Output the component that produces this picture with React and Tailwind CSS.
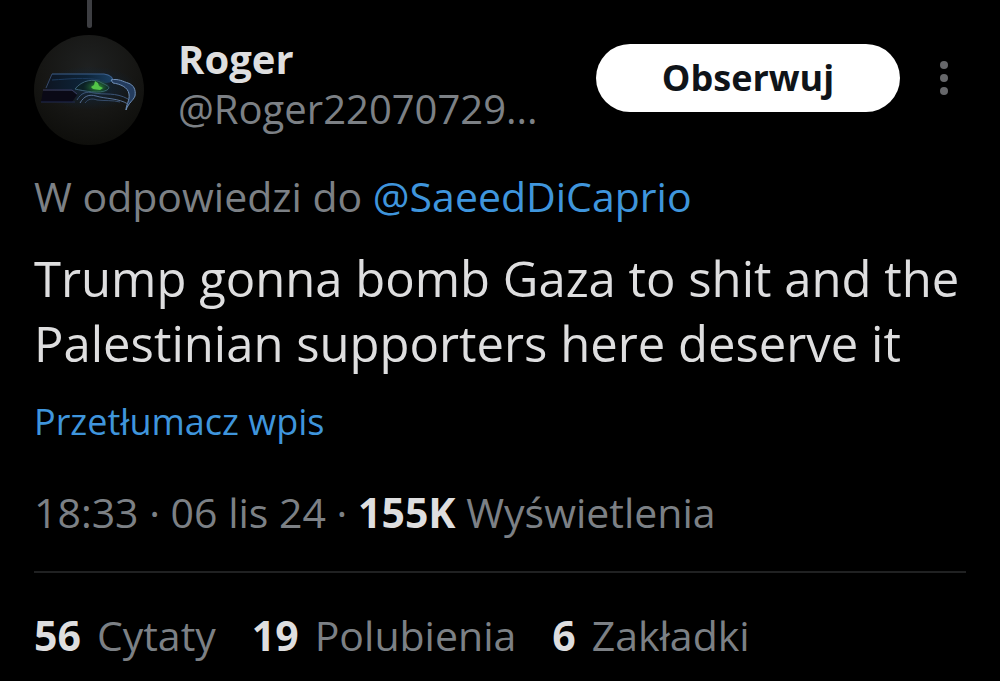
import React from 'react'

const stats = [
  { value: '56', label: 'Cytaty' },
  { value: '19', label: 'Polubienia' },
  { value: '6', label: 'Zakładki' },
]

const Avatar = () => (
  <svg viewBox="0 0 112 112" className="size-28 shrink-0" role="img" aria-label="Roger">
    <defs>
      <radialGradient id="disc" cx="0.5" cy="0.3" r="0.7">
        <stop offset="0" stopColor="#1f2121" />
        <stop offset="0.6" stopColor="#161614" />
        <stop offset="1" stopColor="#0e0e0b" />
      </radialGradient>
      <radialGradient id="haze">
        <stop offset="0" stopColor="#0e2740" stopOpacity="0.8" />
        <stop offset="1" stopColor="#0e2740" stopOpacity="0" />
      </radialGradient>
      <linearGradient id="crown" x1="0" y1="0" x2="1" y2="0">
        <stop offset="0" stopColor="#0d1522" />
        <stop offset="0.6" stopColor="#0d2439" />
        <stop offset="1" stopColor="#1b4063" />
      </linearGradient>
      <radialGradient id="glow">
        <stop offset="0" stopColor="#3fae3c" stopOpacity="0.9" />
        <stop offset="1" stopColor="#1c5a3a" stopOpacity="0" />
      </radialGradient>
    </defs>
    <circle cx="55" cy="56" r="55" fill="url(#disc)" />
    <ellipse cx="56" cy="54" rx="48" ry="22" fill="url(#haze)" />
    {/* head */}
    <path d="M18 40 H70 C76 41 79 43 79 47 C74 50 69 49 64 47 C54 44 47 49 41 56 H12 Z" fill="url(#crown)" />
    <path d="M18 40 H70 C76 41 79 43 79 47" fill="none" stroke="#3b5f8c" strokeWidth="1.2" />
    <path d="M18 40 L12 54" stroke="#35496b" strokeWidth="1" />
    <path d="M18 46 C36 45 50 43 66 46" fill="none" stroke="#1d3a5c" strokeWidth="1" />
    {/* back of the neck */}
    <path d="M9 57 H38 L43 61 L38 68 H7 Z" fill="#0a0916" />
    <path d="M9 56 H38 L43 60" fill="none" stroke="#3a3a63" strokeWidth="1" />
    <path d="M7 68 H41" stroke="#212b50" strokeWidth="1" />
    {/* eye */}
    <path d="M41 55 C48 46 60 44 68 49 C74 52 77 53 73 56 C66 60 50 57 41 55 Z" fill="#0b2024" stroke="#3d6078" strokeWidth="1" />
    <ellipse cx="63" cy="53" rx="14" ry="8" fill="url(#glow)" />
    <path d="M57 53 L60 51 L61 47 L64 49 L65 52 L69 54 L66 56 L59 55 Z" fill="#53c447" />
    {/* beak */}
    <path d="M77 46 C84 44 90 48 94 49 C100 51 102 56 101 62 C99 67 95 68 92 76 C92 71 96 66 95 60 C94 53 86 50 79 49 Z" fill="#243c5e" stroke="#7090b8" strokeWidth="1" />
    <path d="M43 66 C47 59 52 57 60 59 C70 61 82 58 94 65" fill="none" stroke="#3b5476" strokeWidth="1" />
    <path d="M46 69 C50 62 55 60 62 62 C72 65 84 64 94 70" fill="none" stroke="#566f93" strokeWidth="1" />
    <path d="M51 69 C54 65 58 64 63 66 C71 67 79 66 86 68" fill="none" stroke="#354b69" strokeWidth="1" />
  </svg>
)

export default function App() {
  return (
    <main className="min-h-screen bg-black px-[34px] pb-4 font-['Open_Sans','Noto_Sans',sans-serif] text-[#dededf]">
      {/* thread line from the previous post */}
      <div className="flex h-[34px] w-[110px] justify-center">
        <div className="h-7 w-[5px] rounded-b-sm bg-[#3d3e42]" />
      </div>

      <article>
        <header className="flex items-start gap-8">
          <Avatar />
          <div className="min-w-0 flex-1 text-[40px] leading-[50px] whitespace-nowrap">
            <h1 className="font-bold">Roger</h1>
            <p className="text-[#7c8085]">@Roger22070729...</p>
          </div>
          <div className="mt-[10px] flex shrink-0 items-center gap-[22px]">
            <button className="h-[68px] w-[304px] rounded-full bg-white text-[36px] leading-[48px] font-bold text-[#0f1419]">
              Obserwuj
            </button>
            <button aria-label="Więcej" className="flex h-[68px] w-11 items-center justify-center">
              <svg viewBox="0 0 8 34" className="h-[34px] w-2" fill="#66676a">
                <circle cx="4" cy="4" r="4" />
                <circle cx="4" cy="17" r="4" />
                <circle cx="4" cy="30" r="4" />
              </svg>
            </button>
          </div>
        </header>

        <p className="mt-[26px] text-[41px] leading-[48px] text-[#7c8085]">
          W odpowiedzi do <a href="#" className="text-[#3f95dc]">@SaeedDiCaprio</a>
        </p>

        <p className="mt-[26px] text-[49px] leading-[65px]">
          Trump gonna bomb Gaza to shit and the Palestinian supporters here deserve it
        </p>

        <a href="#" className="mt-[22px] block text-[36px] leading-[48px] text-[#3f95dc]">Przetłumacz wpis</a>

        <p className="mt-[42px] text-[41px] leading-[48px] text-[#7c8085]">
          18:33 · 06 lis 24 · <strong className="text-[#dededf]">155K</strong> Wyświetlenia
        </p>

        <div className="mt-[35px] flex gap-9 border-t-2 border-[#202122] pt-[38px] text-[41px] leading-[48px] text-[#7c8085]">
          {stats.map((s) => (
            <a href="#" key={s.label} className="flex gap-4">
              <strong className="text-[#dededf]">{s.value}</strong>
              <span>{s.label}</span>
            </a>
          ))}
        </div>
      </article>
    </main>
  )
}
